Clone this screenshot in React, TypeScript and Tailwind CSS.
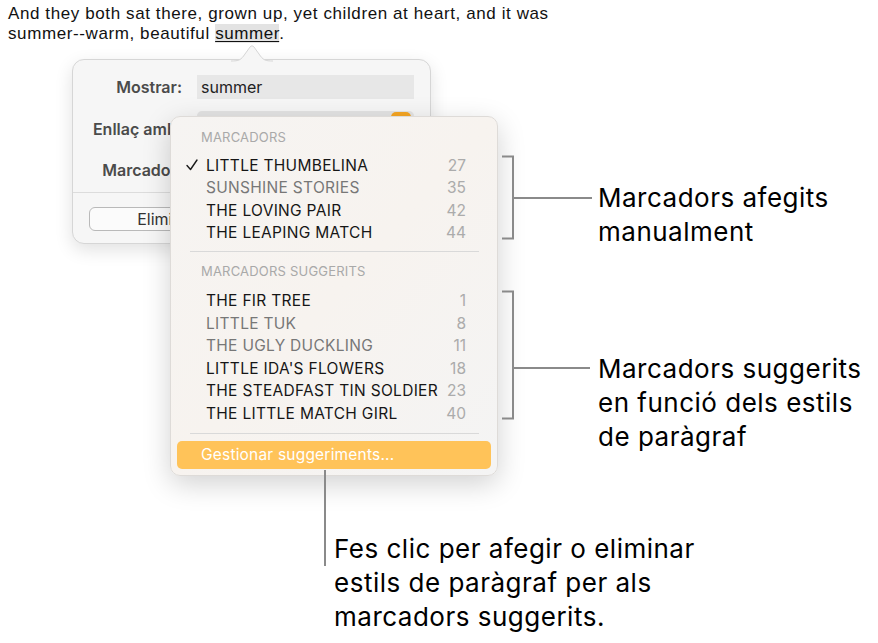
import { Fragment } from 'react';

type Row = { title: string; page: number; dim?: boolean; checked?: boolean };

const MANUAL: Row[] = [
  { title: 'LITTLE THUMBELINA', page: 27, checked: true },
  { title: 'SUNSHINE STORIES', page: 35, dim: true },
  { title: 'THE LOVING PAIR', page: 42 },
  { title: 'THE LEAPING MATCH', page: 44 },
];

const SUGGESTED: Row[] = [
  { title: 'THE FIR TREE', page: 1 },
  { title: 'LITTLE TUK', page: 8, dim: true },
  { title: 'THE UGLY DUCKLING', page: 11, dim: true },
  { title: "LITTLE IDA'S FLOWERS", page: 18 },
  { title: 'THE STEADFAST TIN SOLDIER', page: 23 },
  { title: 'THE LITTLE MATCH GIRL', page: 40 },
];

const sf = { fontFamily: 'Inter, "Noto Sans", sans-serif' };

export default function App() {
  return (
    <div className="relative w-[878px] h-[643px] overflow-hidden bg-white text-black">
      {/* document text */}
      <p
        className="pl-[8px] pt-[4px] text-[17px] leading-[19.5px] tracking-[0.6px] text-[#111]"
        style={{ fontFamily: '"Liberation Sans", Arial, sans-serif' }}
      >
        And they both sat there, grown up, yet children at heart, and it was
        <br />
        summer--warm, beautiful{' '}
        <span className="bg-[#e3e3e3] underline underline-offset-2">summer</span>.
      </p>

      {/* link popover */}
      <LinkPopover />

      {/* bookmark menu */}
      <BookmarkMenu />

      {/* callout lines */}
      <svg className="absolute left-0 top-0" width="878" height="643" fill="none">
        <path d="M502 156.5H513V238.5H502M513 198H592" stroke="#8a8a8a" strokeWidth="2" />
        <path d="M502 291.5H513V418.5H502M513 368H590" stroke="#8a8a8a" strokeWidth="2" />
        <path d="M325 470V566" stroke="#8a8a8a" strokeWidth="2" />
      </svg>

      <Callout className="left-[598px] top-[181px]" lines={['Marcadors afegits', 'manualment']} />
      <Callout
        className="left-[598px] top-[352px]"
        lines={['Marcadors suggerits', 'en funció dels estils', 'de paràgraf']}
      />
      <Callout
        className="left-[334px] top-[532px]"
        lines={['Fes clic per afegir o eliminar', 'estils de paràgraf per als', 'marcadors suggerits.']}
      />
    </div>
  );
}

function Callout({ lines, className }: { lines: string[]; className: string }) {
  return (
    <div
      className={`absolute whitespace-nowrap text-[26px] leading-[34px] tracking-[0.5px] text-black ${className}`}
      style={sf}
    >
      {lines.map((l, i) => (
        <Fragment key={i}>
          {l}
          {i < lines.length - 1 && <br />}
        </Fragment>
      ))}
    </div>
  );
}

function LinkPopover() {
  return (
    <div
      className="absolute left-[72px] top-[59px] w-[359px] h-[185px] rounded-[12px] border border-[#d6d6d6] bg-[#f6f6f6] shadow-[0_6px_18px_rgba(0,0,0,0.12)]"
      style={sf}
    >
      {/* arrow */}
      <svg className="absolute left-[158px] top-[-15px]" width="42" height="17" viewBox="0 0 42 17">
        <path d="M0 16C8 16 10 15 14 9L19 2C20 0.5 22 0.5 23 2L28 9C32 15 34 16 42 16V17H0Z" fill="#f6f6f6" />
        <path d="M0 16C8 16 10 15 14 9L19 2C20 0.5 22 0.5 23 2L28 9C32 15 34 16 42 16" fill="none" stroke="#d6d6d6" />
      </svg>

      <div className="flex flex-col pt-[15px]">
        <div className="flex items-center h-[24px]">
          <span className="w-[109px] text-right text-[16px] font-semibold text-[#4b4b4b]">Mostrar:</span>
          <div className="ml-[15px] w-[217px] h-[24px] bg-[#e7e7e7] flex items-center px-[4px] text-[16px] text-[#222]">
            summer
          </div>
        </div>
        <div className="flex items-start h-[24px] mt-[12px]">
          <span className="w-[109px] pt-[6px] text-right text-[16px] font-semibold text-[#4b4b4b]">Enllaç amb:</span>
          <div className="relative ml-[15px] w-[217px] h-[24px] rounded-[5px] bg-[#e4e4e4]">
            <div className="absolute right-[3px] top-[1px] w-[20px] h-[20px] rounded-[5px] bg-[#f6a623]" />
          </div>
        </div>
        <div className="flex items-center h-[24px] mt-[23px]">
          <span className="w-[109px] text-right text-[16px] font-semibold text-[#4b4b4b]">Marcador:</span>
        </div>
        <div className="mt-[10px] h-px bg-[#dcdcdc]" />
        <div className="mt-[14px] ml-[16px] w-[156px] h-[24px] rounded-[6px] border border-[#b9b9b9] bg-[#fbfbfb] flex items-center justify-center text-[16px] text-[#333]">
          Eliminar
        </div>
      </div>
    </div>
  );
}

function BookmarkMenu() {
  return (
    <div
      className="absolute left-[170px] top-[116px] w-[328px] h-[360px] rounded-[10px] border border-[#dedbd8] bg-gradient-to-br from-[#f6f4f2] via-[#f7f3ef] to-[#f4f4f4] shadow-[0_8px_28px_rgba(0,0,0,0.18)]"
      style={sf}
    >
      <div className="flex flex-col pt-[11px] pb-[7px]">
        <SectionHeader text="MARCADORS" />
        <div className="mt-[8px] flex flex-col">
          {MANUAL.map((r) => (
            <MenuRow key={r.title} row={r} />
          ))}
        </div>
        <div className="mt-[7px] ml-[19px] mr-[18px] h-px bg-[#d9d9d9]" />
        <div className="mt-[10px]">
          <SectionHeader text="MARCADORS SUGGERITS" />
        </div>
        <div className="mt-[9px] flex flex-col">
          {SUGGESTED.map((r) => (
            <MenuRow key={r.title} row={r} />
          ))}
        </div>
        <div className="mt-[8px] ml-[19px] mr-[18px] h-px bg-[#d9d9d9]" />
        <div className="mt-[7px] mx-[6px] h-[28px] rounded-[5px] bg-[#ffc359] flex items-center pl-[24px] text-[15.5px] tracking-[0.2px] text-white">
          Gestionar suggeriments...
        </div>
      </div>
    </div>
  );
}

function SectionHeader({ text }: { text: string }) {
  return (
    <div className="pl-[30px] h-[18px] leading-[18px] text-[13px] tracking-[0.2px] text-[#a9a9a9]">{text}</div>
  );
}

function MenuRow({ row }: { row: Row }) {
  return (
    <div className="flex items-center h-[22.6px] pl-[15px] pr-[31px] text-[15.5px]">
      <span className="w-[20px] flex items-center">
        {row.checked && (
          <svg width="12" height="12" viewBox="0 0 12 12" fill="none">
            <path d="M1 6.5L4.5 10.5L11 1" stroke="#1a1a1a" strokeWidth="1.4" strokeLinecap="round" strokeLinejoin="round" />
          </svg>
        )}
      </span>
      <span className={`flex-1 tracking-[0.3px] ${row.dim ? 'text-[#777]' : 'text-[#161616]'}`}>{row.title}</span>
      <span className="text-[#ababab]">{row.page}</span>
    </div>
  );
}
